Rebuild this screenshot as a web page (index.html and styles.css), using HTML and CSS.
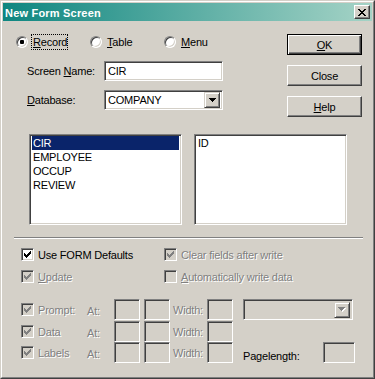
FILE: index.html
```html
<!DOCTYPE html>
<html lang="en">
<head>
    <meta charset="UTF-8">
    <title>New Form Screen</title>
    <link rel="stylesheet" href="styles.css">
</head>
<body>
<div class="window">
  <div class="frame">
    <div class="titlebar">
        <span class="title">New Form Screen</span>
        <span class="close-btn">
            <svg width="8" height="7" viewBox="0 0 8 7" shape-rendering="crispEdges"><path fill="#000" d="M0 0h2v1H0z M6 0h2v1H6z M1 1h2v1H1z M5 1h2v1H5z M2 2h4v1H2z M3 3h2v1H3z M2 4h4v1H2z M1 5h2v1H1z M5 5h2v1H5z M0 6h2v1H0z M6 6h2v1H6z"/></svg>
        </span>
    </div>

    <div class="top">
        <div class="form">
            <div class="radios">
                <div class="radio-item"><span class="radio on"></span><span class="radio-label focus"><u>R</u>ecord</span></div>
                <div class="radio-item"><span class="radio"></span><span class="radio-label"><u>T</u>able</span></div>
                <div class="radio-item"><span class="radio"></span><span class="radio-label"><u>M</u>enu</span></div>
            </div>
            <div class="field first">
                <span class="field-label">Screen <u>N</u>ame:</span>
                <div class="edit">CIR</div>
            </div>
            <div class="field second">
                <span class="field-label"><u>D</u>atabase:</span>
                <div class="combo">
                    <span class="combo-text">COMPANY</span>
                    <span class="drop"><svg width="7" height="4" viewBox="0 0 7 4" shape-rendering="crispEdges"><path fill="#000" d="M0 0h7v1H0z M1 1h5v1H1z M2 2h3v1H2z M3 3h1v1H3z"/></svg></span>
                </div>
            </div>
        </div>
        <div class="buttons">
            <button class="btn default"><u>O</u>K</button>
            <button class="btn">Close</button>
            <button class="btn"><u>H</u>elp</button>
        </div>
    </div>

    <div class="lists">
        <div class="listbox">
            <div class="item selected">CIR</div>
            <div class="item">EMPLOYEE</div>
            <div class="item">OCCUP</div>
            <div class="item">REVIEW</div>
        </div>
        <div class="listbox">
            <div class="item">ID</div>
        </div>
    </div>

    <div class="separator"></div>

    <div class="checks">
        <div class="check">
            <span class="box"><svg width="7" height="7" viewBox="0 0 7 7" shape-rendering="crispEdges"><path class="tick" d="M6 0h1v1h-1z M5 1h2v1h-2z M0 2h1v1H0z M4 2h3v1H4z M0 3h2v1H0z M3 3h3v1H3z M0 4h5v1H0z M1 5h3v1H1z M2 6h1v1H2z"/></svg></span>
            <span>Use FORM Defaults</span>
        </div>
        <div class="check disabled">
            <span class="box"><svg width="7" height="7" viewBox="0 0 7 7" shape-rendering="crispEdges"><path class="tick" d="M6 0h1v1h-1z M5 1h2v1h-2z M0 2h1v1H0z M4 2h3v1H4z M0 3h2v1H0z M3 3h3v1H3z M0 4h5v1H0z M1 5h3v1H1z M2 6h1v1H2z"/></svg></span>
            <span class="gray">Clear fields after write</span>
        </div>
        <div class="check disabled">
            <span class="box"><svg width="7" height="7" viewBox="0 0 7 7" shape-rendering="crispEdges"><path class="tick" d="M6 0h1v1h-1z M5 1h2v1h-2z M0 2h1v1H0z M4 2h3v1H4z M0 3h2v1H0z M3 3h3v1H3z M0 4h5v1H0z M1 5h3v1H1z M2 6h1v1H2z"/></svg></span>
            <span class="gray"><u>U</u>pdate</span>
        </div>
        <div class="check disabled">
            <span class="box"></span>
            <span class="gray"><u>A</u>utomatically write data</span>
        </div>
    </div>

    <div class="layout">
        <div class="check disabled">
            <span class="box"><svg width="7" height="7" viewBox="0 0 7 7" shape-rendering="crispEdges"><path class="tick" d="M6 0h1v1h-1z M5 1h2v1h-2z M0 2h1v1H0z M4 2h3v1H4z M0 3h2v1H0z M3 3h3v1H3z M0 4h5v1H0z M1 5h3v1H1z M2 6h1v1H2z"/></svg></span>
            <span class="gray">Prompt:</span>
        </div>
        <span class="gray at">At:</span>
        <span class="sunk"></span>
        <span class="sunk"></span>
        <span class="gray">Width:</span>
        <span class="sunk"></span>
        <div class="combo off">
            <span class="combo-text"></span>
            <span class="drop"><svg width="8" height="5" viewBox="0 0 8 5" shape-rendering="crispEdges"><path fill="#fff" d="M1 1h7v1H1z M2 2h5v1H2z M3 3h3v1H3z M4 4h1v1H4z"/><path fill="#808080" d="M0 0h7v1H0z M1 1h5v1H1z M2 2h3v1H2z M3 3h1v1H3z"/></svg></span>
        </div>

        <div class="check disabled">
            <span class="box"><svg width="7" height="7" viewBox="0 0 7 7" shape-rendering="crispEdges"><path class="tick" d="M6 0h1v1h-1z M5 1h2v1h-2z M0 2h1v1H0z M4 2h3v1H4z M0 3h2v1H0z M3 3h3v1H3z M0 4h5v1H0z M1 5h3v1H1z M2 6h1v1H2z"/></svg></span>
            <span class="gray">Data</span>
        </div>
        <span class="gray at">At:</span>
        <span class="sunk"></span>
        <span class="sunk"></span>
        <span class="gray">Width:</span>
        <span class="sunk"></span>
        <span></span>

        <div class="check disabled">
            <span class="box"><svg width="7" height="7" viewBox="0 0 7 7" shape-rendering="crispEdges"><path class="tick" d="M6 0h1v1h-1z M5 1h2v1h-2z M0 2h1v1H0z M4 2h3v1H4z M0 3h2v1H0z M3 3h3v1H3z M0 4h5v1H0z M1 5h3v1H1z M2 6h1v1H2z"/></svg></span>
            <span class="gray">Labels</span>
        </div>
        <span class="gray at">At:</span>
        <span class="sunk"></span>
        <span class="sunk"></span>
        <span class="gray">Width:</span>
        <span class="sunk"></span>
        <div class="pagelength">
            <span class="pl-label">Pagelength:</span>
            <span class="sunk wide"></span>
        </div>
    </div>
  </div>
</div>
</body>
</html>
```

FILE: styles.css
```css
* {
    box-sizing: border-box;
}
body {
    margin: 0;
    background: #d4d0c8;
    font-family: "Liberation Sans", Arial, sans-serif;
    font-size: 11px;
    letter-spacing: -0.2px;
    color: #000;
}
u {
    text-decoration: underline;
    text-underline-offset: 1px;
}
.window {
    width: 375px;
    height: 379px;
    border: 1px solid;
    border-color: #d4d0c8 #404040 #404040 #d4d0c8;
    background: #d4d0c8;
}
.frame {
    height: 100%;
    border: 1px solid;
    border-color: #fff #808080 #808080 #fff;
    padding: 1px;
}

/* title bar */
.titlebar {
    height: 18px;
    display: flex;
    align-items: center;
    justify-content: space-between;
    padding: 0 2px;
    background: linear-gradient(to right, #0e8680, #a5d3c6);
}
.title {
    color: #fff;
    font-weight: bold;
    letter-spacing: 0.2px;
    padding-top: 1px;
}
.close-btn {
    width: 16px;
    height: 14px;
    display: flex;
    align-items: center;
    justify-content: center;
    background: #d4d0c8;
    border: 1px solid;
    border-color: #fff #404040 #404040 #fff;
    box-shadow: inset -1px -1px #808080;
}

/* raised / sunken bits */
.btn {
    width: 75px;
    height: 21px;
    font: inherit;
    letter-spacing: inherit;
    color: #000;
    background: #d4d0c8;
    border: 1px solid;
    border-color: #fff #404040 #404040 #fff;
    box-shadow: inset -1px -1px #808080;
    padding: 0;
}
.btn.default {
    border-color: #000;
    box-shadow: inset 1px 1px #fff, inset -1px -1px #404040, inset -2px -2px #808080;
}
.edit, .combo, .listbox, .sunk, .box {
    border: 1px solid;
    border-color: #808080 #fff #fff #808080;
    box-shadow: inset 1px 1px #404040, inset -1px -1px #d4d0c8;
    background: #fff;
}

/* top part */
.top {
    display: flex;
}
.form {
    width: 284px;
}
.radios {
    display: flex;
    align-items: center;
    height: 16px;
    margin-top: 13px;
    padding-left: 13px;
}
.radio-item {
    display: flex;
    align-items: center;
    width: 74px;
}
.radio {
    position: relative;
    width: 12px;
    height: 12px;
    border-radius: 50%;
    border: 1px solid;
    border-color: #808080 #fff #fff #808080;
    box-shadow: inset 1px 1px #404040, inset -1px -1px #d4d0c8;
    background: #fff;
}
.radio.on::after {
    content: "";
    position: absolute;
    left: 3px;
    top: 3px;
    width: 4px;
    height: 4px;
    border-radius: 1px;
    background: #000;
}
.radio-label {
    margin-left: 3px;
    border: 1px dotted transparent;
    line-height: 14px;
    padding: 0 0 0 1px;
}
.radio-label.focus {
    border-color: #000;
}
.field {
    display: flex;
    align-items: center;
    height: 20px;
    padding-left: 24px;
}
.field.first {
    margin-top: 11px;
}
.field.second {
    margin-top: 9px;
}
.field-label {
    width: 77px;
}
.edit {
    width: 119px;
    height: 20px;
    display: flex;
    align-items: center;
    padding: 0 3px;
}
.combo {
    width: 119px;
    height: 20px;
    display: flex;
    align-items: center;
    justify-content: space-between;
    padding: 2px 2px 2px 2px;
}
.combo-text {
    padding-left: 1px;
}
.drop {
    width: 16px;
    height: 16px;
    display: flex;
    align-items: center;
    justify-content: center;
    background: #d4d0c8;
    border: 1px solid;
    border-color: #d4d0c8 #404040 #404040 #d4d0c8;
    box-shadow: inset 1px 1px #fff, inset -1px -1px #808080;
}
.buttons {
    display: flex;
    flex-direction: column;
    gap: 10px;
    padding-top: 13px;
}

/* list boxes */
.lists {
    display: flex;
    gap: 12px;
    margin-top: 17px;
    padding-left: 26px;
}
.listbox {
    width: 153px;
    height: 91px;
    padding: 1px 2px 0 2px;
}
.item {
    height: 14px;
    line-height: 14px;
    padding-left: 1px;
}
.item.selected {
    background: #0a246a;
    color: #fff;
}

.separator {
    width: 349px;
    height: 2px;
    margin: 12px 0 0 11px;
    border-top: 1px solid #808080;
    border-bottom: 1px solid #fff;
}

/* check boxes */
.checks {
    display: grid;
    grid-template-columns: 143px auto;
    grid-auto-rows: 13px;
    row-gap: 9px;
    margin-top: 9px;
    padding-left: 18px;
}
.check {
    display: flex;
    align-items: center;
    gap: 4px;
}
.box {
    width: 13px;
    height: 13px;
    display: flex;
    align-items: center;
    justify-content: center;
    flex-shrink: 0;
}
.tick {
    fill: #000;
}
.disabled .box {
    background: #d4d0c8;
}
.disabled .tick {
    fill: #808080;
}
.gray {
    color: #808080;
    text-shadow: 1px 1px 0 #fff;
}

/* prompt / data / labels rows */
.layout {
    display: grid;
    grid-template-columns: 66px 27px 30px 29px 34px 36px 1fr;
    grid-template-rows: 22px 21px 21px;
    align-items: start;
    margin-top: 16px;
    padding-left: 18px;
}
.layout > .check,
.layout > .gray {
    height: 21px;
    display: flex;
    align-items: center;
}
.layout .at {
    padding-top: 3px;
}
.sunk {
    width: 26px;
    height: 21px;
    background: #d4d0c8;
}
.combo.off {
    width: 110px;
    height: 21px;
    background: #d4d0c8;
}
.pagelength {
    display: flex;
    align-items: center;
}
.pl-label {
    width: 80px;
    padding-top: 6px;
}
.sunk.wide {
    width: 32px;
}
```
